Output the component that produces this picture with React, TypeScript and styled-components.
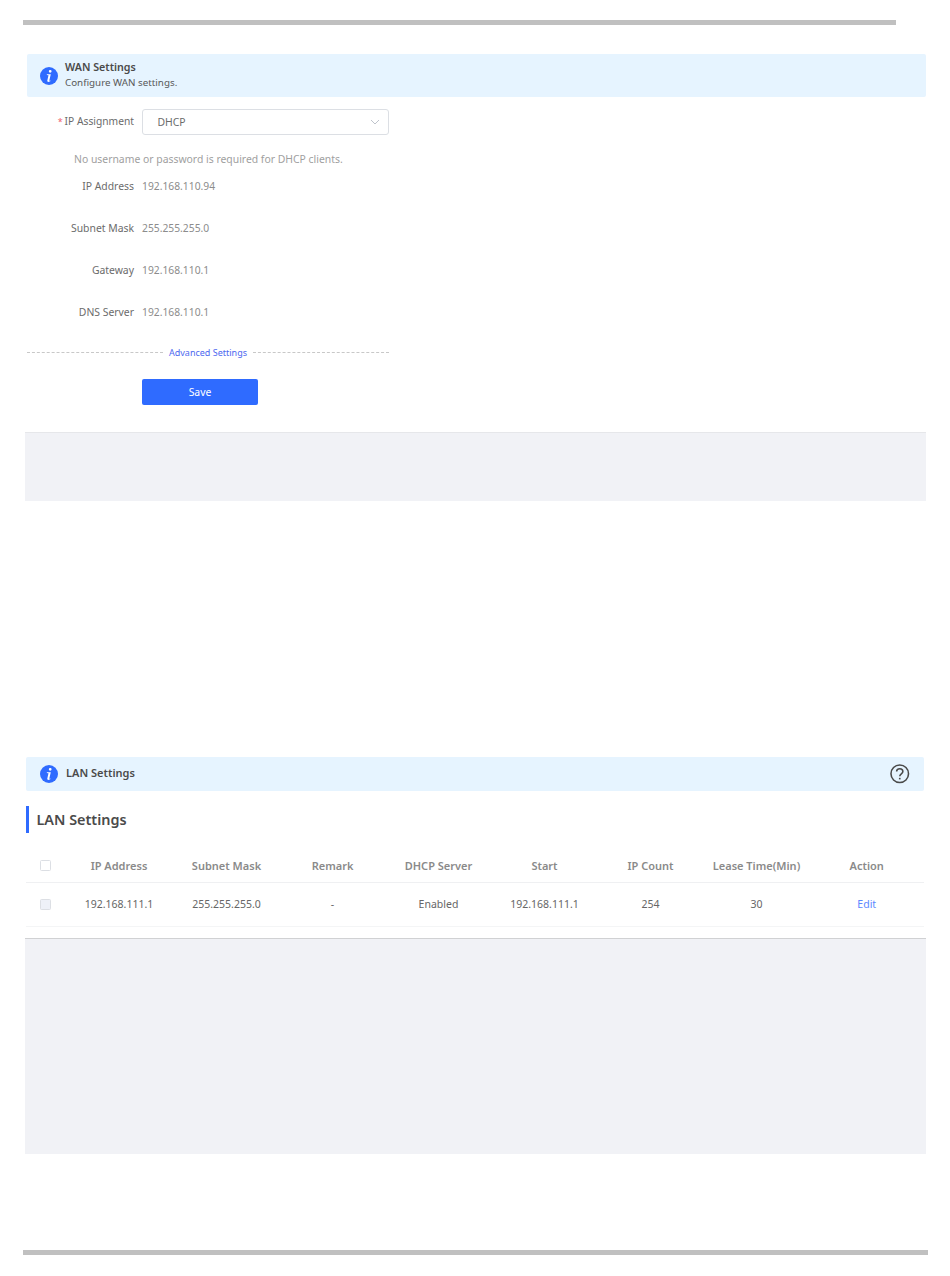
import React from "react";
import styled, { createGlobalStyle } from "styled-components";

const Global = createGlobalStyle`
  html, body { margin: 0; padding: 0; background: #fff; }
  body { font-family: "Noto Sans", "Open Sans", "Liberation Sans", sans-serif; }
`;

const Page = styled.div`
  width: 950px;
  height: 1276px;
  display: flex;
  flex-direction: column;
  overflow: hidden;
  background: #fff;
  font-size: 10.4px;
  color: #595959;
`;

const Rule = styled.div<{ $width: number; $top: number }>`
  flex: none;
  width: ${(p) => p.$width}px;
  height: 5px;
  margin: ${(p) => p.$top}px 0 0 23px;
  background: #c0c0c0;
`;

const Banner = styled.div<{ $left: number; $width: number; $height: number; $top: number; $gap: number }>`
  flex: none;
  box-sizing: border-box;
  width: ${(p) => p.$width}px;
  height: ${(p) => p.$height}px;
  margin: ${(p) => p.$top}px 0 0 ${(p) => p.$left}px;
  padding: 0 14.5px 0 ${(p) => 40 - p.$left}px;
  display: flex;
  align-items: center;
  gap: ${(p) => p.$gap}px;
  background: #e6f4ff;
  border-radius: 2px;
`;

const BannerText = styled.div`
  display: flex;
  flex-direction: column;
  gap: 2px;
  flex: 1;
  padding-bottom: 2px;
  line-height: 14px;
`;

const BannerTitle = styled.div`
  font-size: 10.7px;
  font-weight: 600;
  color: #4a4a4a;
`;

const BannerSub = styled.div`
  font-size: 9.8px;
  color: #595959;
`;

const Form = styled.div`
  flex: none;
  width: 361.5px;
  margin: 12px 0 0 27px;
  display: flex;
  flex-direction: column;
`;

const Row = styled.div`
  display: grid;
  grid-template-columns: 107px 1fr;
  column-gap: 8px;
  align-items: center;
  height: 42px;
`;

const SelectRow = styled(Row)`
  height: 26px;
`;

const Label = styled.div`
  text-align: right;
  color: #6b6b6b;
`;

const SelectLabel = styled(Label)`
  font-size: 10.25px;
  padding-bottom: 2px;
`;

const Required = styled.span`
  color: #f0616d;
  font-size: 9px;
  margin-right: 2px;
`;

const Value = styled.div`
  font-size: 10.3px;
  color: #8c8c8c;
`;

const Select = styled.div`
  box-sizing: border-box;
  height: 26px;
  display: flex;
  align-items: center;
  justify-content: space-between;
  padding: 0 8px 0 14.5px;
  border: 1px solid #dcdfe4;
  border-radius: 3px;
  color: #6b6b6b;
`;

const Hint = styled.div`
  margin: 17px 0 0 47px;
  height: 14px;
  line-height: 14px;
  color: #a0a0a0;
`;

const FieldList = styled.div`
  margin-top: -1px;
`;

const Divider = styled.div`
  display: flex;
  align-items: center;
  gap: 6px;
  height: 12px;
  margin-top: 13px;
  margin-bottom: 2px;
  color: #4d68f0;
  font-size: 9px;

  &::before,
  &::after {
    content: "";
    flex: 1;
    border-top: 1px dashed #c8c8c8;
  }
  &::before { flex: none; width: 136px; }
`;

const SaveRow = styled.div`
  margin: 19px 0 0 115px;
`;

const Save = styled.button`
  display: block;
  width: 116px;
  height: 26px;
  padding: 0;
  border: 0;
  border-radius: 2px;
  background: #2f6bff;
  color: #fff;
  font: inherit;
`;

const GrayBlock = styled.div<{ $height: number; $top: number; $line: string }>`
  flex: none;
  box-sizing: border-box;
  width: 901px;
  height: ${(p) => p.$height}px;
  margin: ${(p) => p.$top}px 0 0 25px;
  background: #f1f2f6;
  border-top: 1px solid ${(p) => p.$line};
`;

const LanTitle = styled.div`
  flex: 1;
  font-size: 11px;
  font-weight: 600;
  color: #4a4a4a;
  padding-bottom: 3px;
`;

const Heading = styled.h2`
  flex: none;
  box-sizing: border-box;
  height: 27px;
  margin: 15px 0 0 26px;
  padding-left: 7.5px;
  border-left: 3px solid #2f6bff;
  font-size: 14.4px;
  font-weight: 600;
  line-height: 28px;
  color: #4a4a4a;
`;

const Table = styled.div`
  flex: none;
  width: 898px;
  margin: 17px 0 0 26px;
`;

const TableRow = styled.div<{ $height: number; $line: string }>`
  box-sizing: border-box;
  display: grid;
  grid-template-columns: 38.5px 109px repeat(6, 106px) 114.5px;
  align-items: center;
  text-align: center;
  height: ${(p) => p.$height}px;
  padding-bottom: 1px;
  border-bottom: 1px solid ${(p) => p.$line};
`;

const Head = styled.div`
  font-size: 11px;
  font-weight: 600;
  color: #8a8a8a;
`;

const Cell = styled.div`
  font-size: 10.5px;
  color: #666;
`;

const Link = styled.a`
  color: #5b87ff;
`;

const Check = styled.div<{ $tint?: boolean }>`
  box-sizing: border-box;
  width: 11px;
  height: 11px;
  margin-left: 14px;
  border: 1px solid #dcdfe4;
  border-radius: 1.5px;
  background: ${(p) => (p.$tint ? "#eef1f8" : "#fff")};
`;

const InfoIcon = () => (
  <svg width="18" height="18" viewBox="0 0 18 18" style={{ flex: "none" }}>
    <circle cx="9" cy="9" r="9" fill="#2f6bff" />
    <path
      d="M10.2 2.9a1.4 1.4 0 1 1 0 2.8 1.4 1.4 0 0 1 0-2.8zM6.9 7.3h3.9l-1.5 6.1c-.1.5.3.6 1 .1l.3.6c-1.4 1.1-3.6 1.2-3.3-.6l1.2-5.2-1.7-.3z"
      fill="#fff"
    />
  </svg>
);

const HelpIcon = () => (
  <svg width="19.5" height="19.5" viewBox="0 0 20 20" fill="none" stroke="#4a4a4a" style={{ flex: "none" }}>
    <circle cx="10" cy="10" r="9" strokeWidth="1.6" />
    <path d="M6.8 7.8c0-4 6.4-4 6.4 0 0 2.4-3.2 2.3-3.2 4.8" strokeWidth="1.6" />
    <path d="M10 14.2v1.6" strokeWidth="1.7" />
  </svg>
);

const Chevron = () => (
  <svg width="10" height="6" viewBox="0 0 10 6" fill="none" stroke="#bfc4cc">
    <path d="M1 1l4 4 4-4" strokeWidth="1" />
  </svg>
);

const fields = [
  ["IP Address", "192.168.110.94"],
  ["Subnet Mask", "255.255.255.0"],
  ["Gateway", "192.168.110.1"],
  ["DNS Server", "192.168.110.1"],
];

const headers = ["IP Address", "Subnet Mask", "Remark", "DHCP Server", "Start", "IP Count", "Lease Time(Min)", "Action"];
const cells = ["192.168.111.1", "255.255.255.0", "-", "Enabled", "192.168.111.1", "254", "30"];

export default function App() {
  return (
    <Page>
      <Global />
      <Rule $width={873} $top={20} />
      <Banner $left={27} $width={899} $height={43} $top={29} $gap={7}>
        <InfoIcon />
        <BannerText>
          <BannerTitle>WAN Settings</BannerTitle>
          <BannerSub>Configure WAN settings.</BannerSub>
        </BannerText>
      </Banner>
      <Form>
        <SelectRow>
          <SelectLabel>
            <Required>*</Required>IP Assignment
          </SelectLabel>
          <Select>
            DHCP
            <Chevron />
          </Select>
        </SelectRow>
        <Hint>No username or password is required for DHCP clients.</Hint>
        <FieldList>
          {fields.map(([label, value]) => (
            <Row key={label}>
              <Label>{label}</Label>
              <Value>{value}</Value>
            </Row>
          ))}
        </FieldList>
        <Divider>Advanced Settings</Divider>
        <SaveRow>
          <Save>Save</Save>
        </SaveRow>
      </Form>
      <GrayBlock $height={69} $top={27} $line="#e6e7ea" />
      <Banner $left={26} $width={898} $height={34} $top={256} $gap={8}>
        <InfoIcon />
        <LanTitle>LAN Settings</LanTitle>
        <HelpIcon />
      </Banner>
      <Heading>LAN Settings</Heading>
      <Table>
        <TableRow $height={33} $line="#eff0f2">
          <Check />
          {headers.map((h) => (
            <Head key={h}>{h}</Head>
          ))}
        </TableRow>
        <TableRow $height={44} $line="#f4f5f6">
          <Check $tint />
          {cells.map((c, i) => (
            <Cell key={i}>{c}</Cell>
          ))}
          <Cell>
            <Link>Edit</Link>
          </Cell>
        </TableRow>
      </Table>
      <GrayBlock $height={216} $top={11} $line="#d0d1d3" />
      <Rule $width={905} $top={96} />
    </Page>
  );
}
